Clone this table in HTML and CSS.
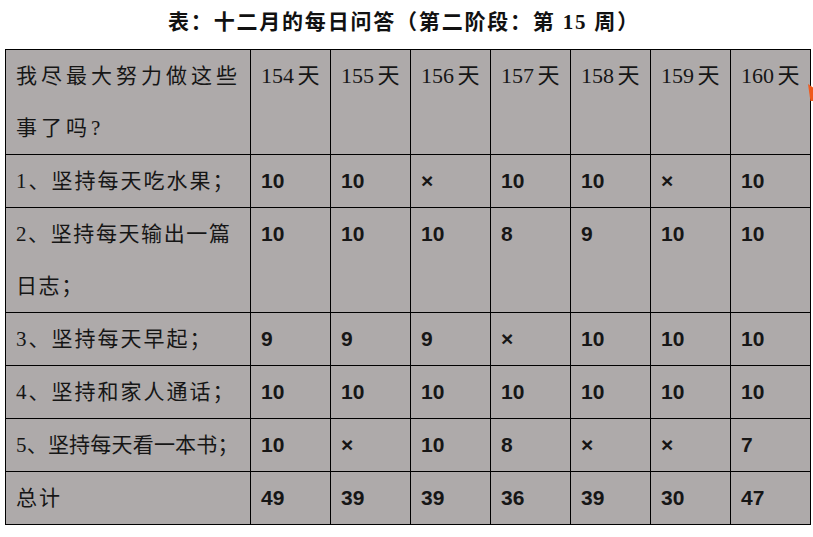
FILE: index.html
```html
<!DOCTYPE html>
<html lang="zh-CN">
<head>
<meta charset="utf-8">
<title>十二月的每日问答</title>
<link rel="stylesheet" href="styles.css">
</head>
<body>
<div class="page">
  <h1 class="title">表：十二月的每日问答（第二阶段：第 15 周）</h1>
  <table class="grid">
    <colgroup>
      <col class="c-label">
      <col class="c-day"><col class="c-day"><col class="c-day"><col class="c-day"><col class="c-day"><col class="c-day"><col class="c-day">
    </colgroup>
    <tr>
      <td class="label wide">我尽最大努力做这些<br>事了吗?</td>
      <td class="day">154 天</td><td class="day">155 天</td><td class="day">156 天</td><td class="day">157 天</td><td class="day">158 天</td><td class="day">159 天</td><td class="day">160 天</td>
    </tr>
    <tr>
      <td class="label">1、坚持每天吃水果；</td>
      <td class="num">10</td><td class="num">10</td><td class="num">×</td><td class="num">10</td><td class="num">10</td><td class="num">×</td><td class="num">10</td>
    </tr>
    <tr>
      <td class="label mid">2、坚持每天输出一篇<br>日志；</td>
      <td class="num">10</td><td class="num">10</td><td class="num">10</td><td class="num">8</td><td class="num">9</td><td class="num">10</td><td class="num">10</td>
    </tr>
    <tr>
      <td class="label">3、坚持每天早起；</td>
      <td class="num">9</td><td class="num">9</td><td class="num">9</td><td class="num">×</td><td class="num">10</td><td class="num">10</td><td class="num">10</td>
    </tr>
    <tr>
      <td class="label">4、坚持和家人通话；</td>
      <td class="num">10</td><td class="num">10</td><td class="num">10</td><td class="num">10</td><td class="num">10</td><td class="num">10</td><td class="num">10</td>
    </tr>
    <tr>
      <td class="label tight">5、坚持每天看一本书；</td>
      <td class="num">10</td><td class="num">×</td><td class="num">10</td><td class="num">8</td><td class="num">×</td><td class="num">×</td><td class="num">7</td>
    </tr>
    <tr>
      <td class="label">总计</td>
      <td class="num">49</td><td class="num">39</td><td class="num">39</td><td class="num">36</td><td class="num">39</td><td class="num">30</td><td class="num">47</td>
    </tr>
  </table>
  <div class="edge-mark"></div>
</div>
</body>
</html>
```

FILE: styles.css
```css
html, body {
  margin: 0;
  padding: 0;
  background: #ffffff;
}

.page {
  position: relative;
  width: 813px;
  height: 537px;
  overflow: hidden;
  padding: 0 0 0 5px;
  box-sizing: border-box;
}

.title {
  margin: 0;
  height: 49px;
  line-height: 44px;
  padding-right: 10px;
  text-align: center;
  font-family: "Liberation Serif", "Noto Sans CJK SC", serif;
  font-size: 21px;
  font-weight: bold;
  color: #111111;
  letter-spacing: 1.8px;
}

.grid {
  border-collapse: collapse;
  table-layout: fixed;
  width: 805px;
  background: #aeaaaa;
  color: #161616;
}

.c-label { width: 245px; }
.c-day { width: 80px; }

.grid td {
  border: 1px solid #000000;
  vertical-align: top;
  padding: 0 0 0 10px;
  line-height: 52px;
  white-space: nowrap;
  overflow: hidden;
}

.label {
  font-family: "Liberation Serif", "Noto Sans CJK SC", serif;
  font-size: 21px;
  letter-spacing: 2px;
}

.label.wide {
  letter-spacing: 4px;
}

.label.mid {
  letter-spacing: 1.6px;
}

.label.tight {
  letter-spacing: 0.2px;
}

.day {
  font-family: "Liberation Serif", "Noto Sans CJK SC", serif;
  font-size: 22px;
  word-spacing: -2px;
}

.num {
  font-family: "Liberation Sans", Arial, sans-serif;
  font-size: 21px;
  font-weight: bold;
}

.edge-mark {
  position: absolute;
  left: 808px;
  top: 84px;
  width: 6px;
  height: 17px;
  background: #f05a1e;
  clip-path: polygon(0 0, 100% 25%, 100% 100%, 40% 100%);
}
```
